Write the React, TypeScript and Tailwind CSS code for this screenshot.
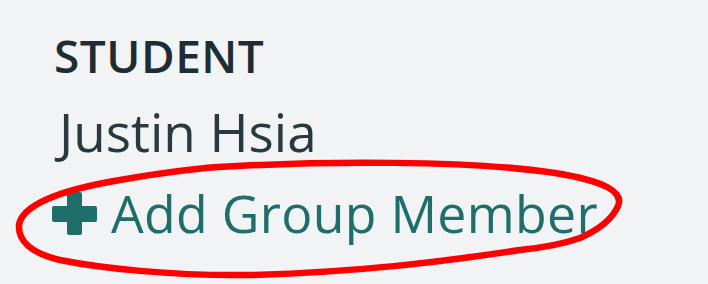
import React from "react"

function PlusIcon() {
  return (
    <svg width="45" height="43" viewBox="0 0 45 43" className="shrink-0">
      <rect x="15" y="0" width="15" height="43" rx="2" fill="#1e6f6a" />
      <rect x="0" y="14" width="45" height="16" rx="2" fill="#1e6f6a" />
    </svg>
  )
}

export default function App() {
  return (
    <div className="relative w-[708px] h-[284px] overflow-hidden bg-[#f2f3f5] font-['Open_Sans',sans-serif]">
      <div className="flex flex-col pl-[52px] pt-[27px]">
        <div className="pl-[2px] text-[46px] leading-[56px] font-semibold tracking-[0.5px] text-[#1d2d33]">STUDENT</div>
        <div className="mt-[17px] pl-[7px] text-[53px] leading-[64px] text-[#2a3940]">Justin Hsia</div>
        <button className="mt-[18px] flex items-center gap-[14px] text-[51.8px] leading-[62px] tracking-[0.3px] text-[#1f6e6b]">
          <PlusIcon />
          <span>Add Group Member</span>
        </button>
      </div>

      {/* red hand-drawn annotation */}
      <svg className="absolute inset-0 pointer-events-none" width="708" height="284" viewBox="0 0 708 284">
        <path
          d="M 218 167 C 320 161, 470 160, 555 173 C 605 181, 624 192, 618 206 C 612 220, 598 230, 580 238 C 560 245, 540 248, 520 250 C 440 262, 360 272, 250 275 C 170 276, 100 268, 60 260 C 30 253, 18 240, 19 225 C 22 205, 60 190, 120 180 C 160 173, 190 169, 218 167"
          fill="none"
          stroke="#ff0000"
          strokeWidth="6.5"
          strokeLinecap="round"
          strokeLinejoin="round"
        />
      </svg>
    </div>
  )
}
